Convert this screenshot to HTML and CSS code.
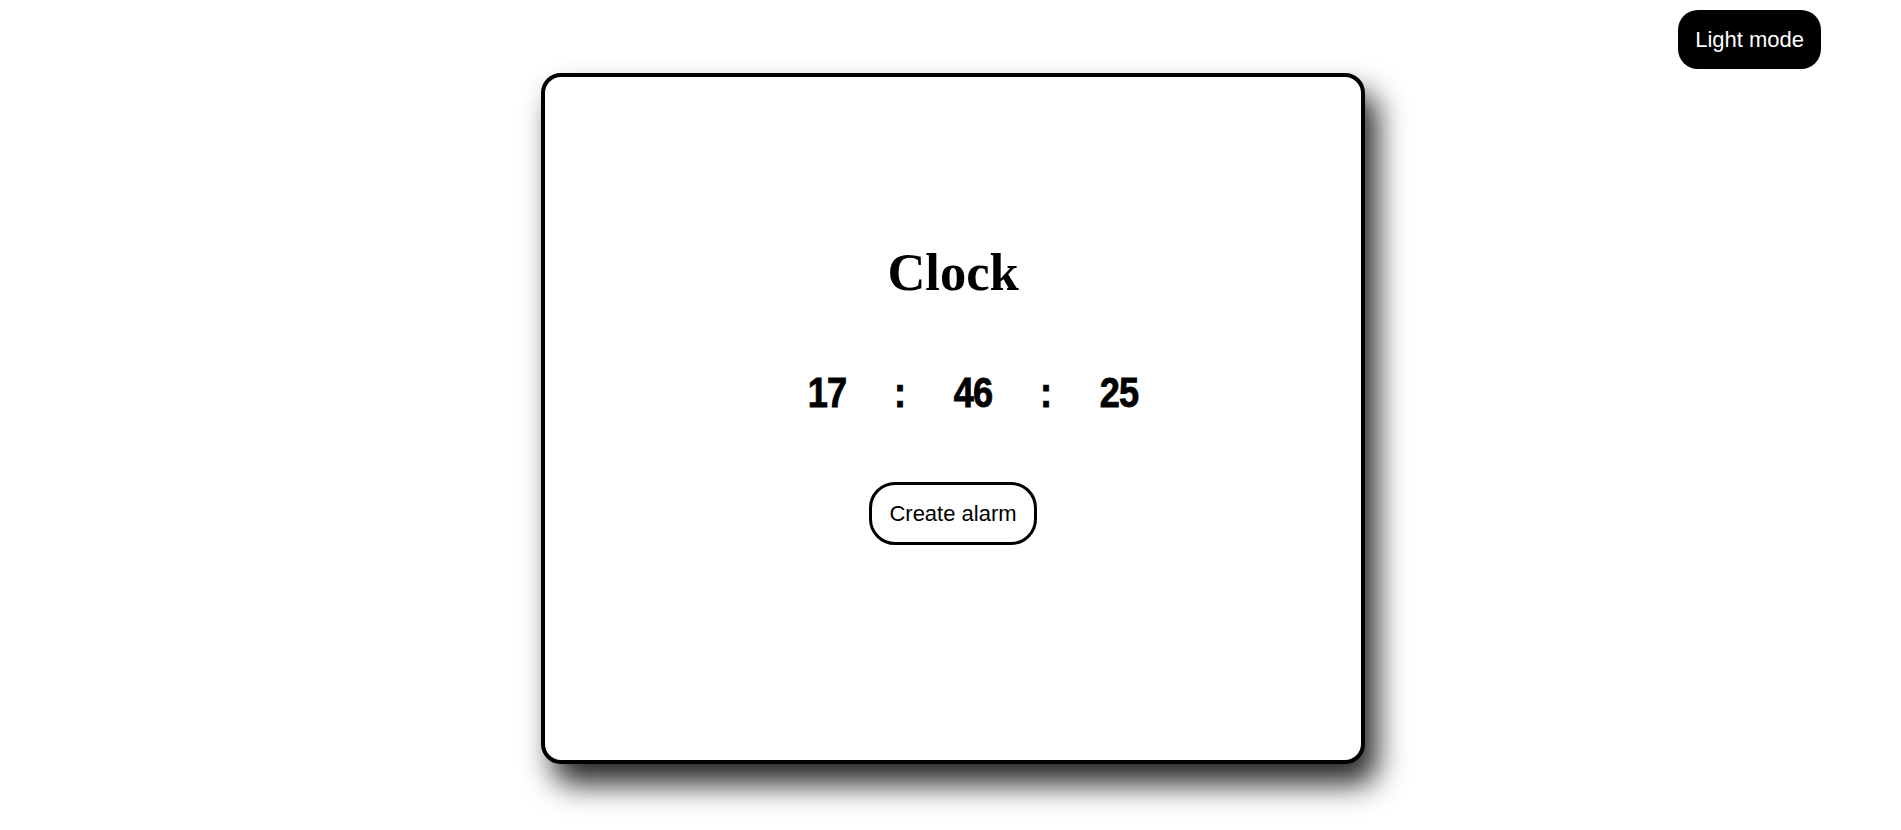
FILE: index.html
```html
<!DOCTYPE html>
<html lang="en">
<head>
<meta charset="utf-8">
<title>Clock</title>
<link rel="stylesheet" href="styles.css">
</head>
<body>
<header class="topbar">
  <button class="mode-btn" type="button">Light mode</button>
</header>
<main class="stage">
  <section class="card">
    <h1 class="title">Clock</h1>
    <div class="time">
      <span class="seg"><span class="glyphs">17</span></span>
      <span class="sep"><span class="glyphs">:</span></span>
      <span class="seg"><span class="glyphs">46</span></span>
      <span class="sep"><span class="glyphs">:</span></span>
      <span class="seg"><span class="glyphs">25</span></span>
    </div>
    <button class="alarm-btn" type="button">Create alarm</button>
  </section>
</main>
</body>
</html>
```
FILE: styles.css
```css
* { box-sizing: border-box; }
html, body { margin: 0; padding: 0; background: #fff; }
body {
  font-family: "Liberation Sans", Arial, sans-serif;
  color: #000;
  height: 830px;
  overflow: hidden;
}
.topbar {
  display: flex;
  justify-content: flex-end;
  padding: 10px 80px 0 0;
  height: 73px;
}
.mode-btn {
  font-family: "Liberation Sans", Arial, sans-serif;
  font-size: 22px;
  line-height: 25px;
  height: 59px;
  padding: 0 17px;
  background: #000;
  color: #fff;
  border: none;
  border-radius: 20px;
}
.stage {
  display: flex;
  justify-content: center;
  padding-left: 5px;
}
.card {
  width: 824px;
  height: 691px;
  border: 4px solid #000;
  border-radius: 20px;
  background: #fff;
  box-shadow: 12px 20px 30px rgba(0,0,0,0.85);
  display: flex;
  flex-direction: column;
  align-items: center;
  padding-top: 167px;
}
.title {
  margin: 0;
  font-family: "Liberation Serif", "Times New Roman", serif;
  font-weight: bold;
  font-size: 52.5px;
  line-height: 57.6px;
}
.time {
  margin-top: 66px;
  display: flex;
  align-items: center;
  gap: 43px;
  padding-left: 39px;
  font-family: Impact, "Liberation Sans", sans-serif;
  font-weight: bold;
  font-size: 43px;
  line-height: 48px;
}
.seg, .sep {
  display: flex;
  justify-content: center;
}
.seg { width: 48px; }
.sep { width: 12px; }
.glyphs {
  display: inline-block;
  transform: scaleX(0.84);
  -webkit-text-stroke: 0.9px #000;
  letter-spacing: -1px;
}
.alarm-btn {
  margin-top: 66px;
  font-family: "Liberation Sans", Arial, sans-serif;
  font-size: 22px;
  line-height: 25px;
  padding: 16px 17px;
  background: #fff;
  color: #000;
  border: 3px solid #000;
  border-radius: 26px;
}
```
